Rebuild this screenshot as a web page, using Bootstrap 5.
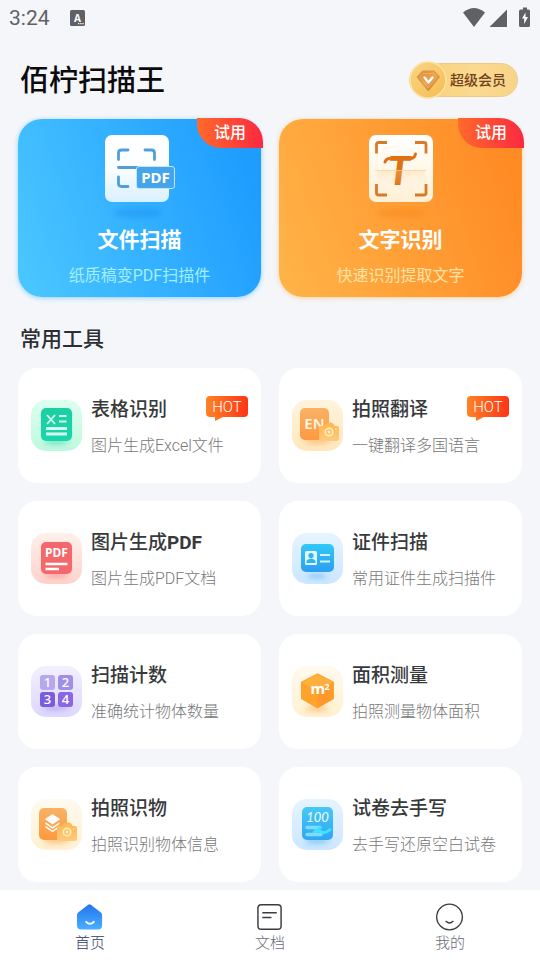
<!DOCTYPE html>
<html lang="zh-CN">
<head>
<meta charset="utf-8">
<meta name="viewport" content="width=device-width, initial-scale=1">
<title>佰柠扫描王</title>
<link href="https://cdn.jsdelivr.net/npm/bootstrap@5.3.0/dist/css/bootstrap.min.css" rel="stylesheet">
<style>
  body { background: #f4f6fa; color: #333; font-family: Roboto, "Noto Sans CJK SC", sans-serif; }
  svg { display: block; flex: none; overflow: visible; }
  .page-pad { padding-left: 18px; padding-right: 18px; }
  .status-bar { height: 36px; padding: 0 10px 0 9px; color: #606164; font-size: 21px; line-height: 36px; gap: 20px; }
  .top-row { margin-top: 25px; margin-bottom: 20px; padding: 0 4px 0 2px; }
  .app-name { padding-top: 2px; font-size: 29px; line-height: 36px; font-weight: 500; color: #0b0b0d; }
  .vip-btn { height: 34px; padding: 0 11px 0 0; border: 1px solid #f0cd82; border-radius: 17px; gap: 2px;
    background: linear-gradient(90deg, #f8cf77, #fbd98e 60%, #f8d48a); color: #70411b; font-size: 14px; line-height: 20px; font-weight: 500; }
  .vip-btn svg { margin: -2px 0; }
  .tile-row { --bs-gutter-x: 18px; --bs-gutter-y: 18px; }
  .hero { padding: 16px 12px 9px; border-radius: 24px; color: #fff; }
  .hero:hover { color: #fff; }
  .hero-scan { background: linear-gradient(70deg, #49c5ff 5%, #1f9dff 90%); box-shadow: 0 1px 5px #8fd0ff; }
  .hero-ocr { background: linear-gradient(70deg, #ffb246 5%, #ff8b25 90%); box-shadow: 0 1px 5px #ffd0a0; }
  .hero-title { margin-top: 5px; font-size: 21px; line-height: 30px; font-weight: 700; }
  .hero-note { margin-top: 9px; font-size: 16px; line-height: 24px; }
  .hero-scan .hero-note { color: #a4efff; }
  .hero-ocr .hero-note { color: #ffe3a6; }
  .trial { top: -1px; right: -2px; width: 66px; height: 30px; border-radius: 0 24px 0 24px;
    background: linear-gradient(90deg, #ff6a2b, #fb2941); font-size: 16px; line-height: 30px; font-weight: 500; }
  .section-title { margin: 27px 2px 14px; font-size: 21px; line-height: 30px; font-weight: 500; color: #2d2e31; }
  .tool { height: 115px; padding: 3px 13px 0; gap: 9px; border-radius: 19px; background: #fff; }
  .tool svg { margin-top: -3px; }
  .tool-title { font-size: 19px; line-height: 28px; font-weight: 500; color: #38393b; }
  .tool-latin { font-weight: 700; }
  .tool-note { margin-top: 10px; font-size: 16px; line-height: 24px; font-weight: 300; color: #77787b; }
  .hot { width: 42px; height: 21px; border-radius: 4px; background: linear-gradient(90deg, #ff8325, #fc3517);
    color: #fff; font-size: 15px; line-height: 22px; font-weight: 300; }
  .hot::after { content: ""; position: absolute; left: 9px; top: 21px; border-style: solid;
    border-width: 4px 8px 0 0; border-color: #fd7622 transparent transparent; }
  .tab-bar { padding: 14px 0 7px; background: #fff; }
  .tab { gap: 1px; font-size: 15px; line-height: 22px; font-weight: 300; color: #686c78; }
  .tab.active { color: #30385f; }
  .tab svg { height: 27px; }
  .ns { font-family: "Noto Sans", sans-serif; }
  .tee { font: italic 900 40px Lato, sans-serif; }
</style>
<script src="https://cdn.jsdelivr.net/npm/bootstrap@5.3.0/dist/js/bootstrap.bundle.min.js"></script>
</head>
<body class="d-flex flex-column min-vh-100">

<svg width="0" height="0" class="position-absolute" aria-hidden="true">
  <defs>
    <linearGradient id="gPaperBlue" x2="0" y2="1"><stop stop-color="#fff"/><stop offset=".5" stop-color="#fafdff"/><stop offset="1" stop-color="#d9f0ff"/></linearGradient>
    <linearGradient id="gPaperOrange" x2="0" y2="1"><stop stop-color="#fff"/><stop offset="1" stop-color="#fff0d6"/></linearGradient>
    <linearGradient id="gBeam" x2="0" y2="1"><stop stop-color="#ffc879" stop-opacity=".65"/><stop offset="1" stop-color="#fff0d6" stop-opacity="0"/></linearGradient>
    <linearGradient id="gGreen" x2="0" y2="1"><stop stop-color="#dcfff0"/><stop offset="1" stop-color="#bff8df"/></linearGradient>
    <linearGradient id="gGreenTile" x2="0" y2="1"><stop stop-color="#1bcfa0"/><stop offset="1" stop-color="#18d7ab"/></linearGradient>
    <linearGradient id="gCream" x2="0" y2="1"><stop stop-color="#fff4dc"/><stop offset="1" stop-color="#ffe7bd"/></linearGradient>
    <linearGradient id="gPale" x2="0" y2="1"><stop stop-color="#fffaf0"/><stop offset="1" stop-color="#fff1d0"/></linearGradient>
    <linearGradient id="gOrangeTile" x2="0" y2="1"><stop stop-color="#f9b265"/><stop offset="1" stop-color="#ff993e"/></linearGradient>
    <linearGradient id="gCam" x2="0" y2="1"><stop stop-color="#ffb64e"/><stop offset="1" stop-color="#ffca7c"/></linearGradient>
    <linearGradient id="gPink" x2="0" y2="1"><stop stop-color="#fff0ea"/><stop offset="1" stop-color="#ffd2cc"/></linearGradient>
    <linearGradient id="gBlue" x2="0" y2="1"><stop stop-color="#e6f4ff"/><stop offset="1" stop-color="#cbe6ff"/></linearGradient>
    <linearGradient id="gBlueTile" x2="0" y2="1"><stop stop-color="#32c9f7"/><stop offset="1" stop-color="#2c9ef2"/></linearGradient>
    <linearGradient id="gExam" x2="0" y2="1"><stop stop-color="#48c8f5"/><stop offset="1" stop-color="#2fa6f4"/></linearGradient>
    <linearGradient id="gViolet" x2="0" y2="1"><stop stop-color="#f2f0ff"/><stop offset="1" stop-color="#ddd7ff"/></linearGradient>
    <linearGradient id="gHome" x2="0" y2="1"><stop stop-color="#2573ed"/><stop offset="1" stop-color="#49b0ff"/></linearGradient>
    <linearGradient id="gMedal" x2="1" y2="1"><stop stop-color="#f9d582"/><stop offset="1" stop-color="#f5bd55"/></linearGradient>
    <linearGradient id="gGem" x2="1" y2="1"><stop stop-color="#d88436"/><stop offset=".5" stop-color="#eaa552"/><stop offset="1" stop-color="#c36c20"/></linearGradient>
    <filter id="soft" x="-50%" y="-100%" width="200%" height="300%"><feGaussianBlur stdDeviation="2.500"/></filter>
    <g id="camera">
      <path d="M2 4h3.500l1-2q1-1.500 3-1.500h2q2 0 3 1.500l1 2H18q2 0 2 2v10.500q0 2.500-2.500 2.500h-15Q0 19 0 16.500V6q0-2 2-2z" fill="url(#gCam)"/>
      <circle cx="10" cy="10" r="3.700" fill="none" stroke="#fff0c4" stroke-width="1.500"/><circle cx="10" cy="10" r="1.400" fill="#fff0c4"/>
      <circle cx="16.800" cy="7" r=".7" fill="#fff0c4"/>
    </g>
  </defs>
</svg>

<header>
  <div class="status-bar d-flex align-items-center">
    <span>3:24</span>
    <svg width="15" height="16" viewBox="0 0 15 16" aria-hidden="true"><rect width="15" height="16" rx="1.500" fill="#606164"/><text class="ns" x="7.500" y="11.500" text-anchor="middle" font-size="10" font-weight="700" fill="#fff">A</text><path d="M8 13.700h1.300M10.200 13.700h1.300M12.400 13.700h1.300" stroke="#fff" stroke-width="1.200"/></svg>
    <svg class="ms-auto" width="67" height="22" viewBox="0 0 67 22" aria-hidden="true" fill="#606164">
      <path d="M0 5.500Q11-3.500 22 5.500L11 20z"/><path d="M44 2.500V20H26.500z"/>
      <path d="M58 2.500h2V.5h4v2h1.500q1.500 0 1.500 1.500v14.500q0 1.500-1.500 1.500h-8q-1.500 0-1.500-1.500V4q0-1.500 2-1.500z"/>
      <path d="M62.500 5.500l-3.500 6h2.200v5.500l3.800-7h-2.500z" fill="#fff"/>
    </svg>
  </div>
  <div class="page-pad">
    <div class="top-row d-flex align-items-center justify-content-between">
      <h1 class="app-name mb-0">佰柠扫描王</h1>
      <button type="button" class="vip-btn d-flex align-items-center">
        <svg width="38" height="38" viewBox="0 0 38 38" aria-hidden="true">
          <circle cx="18" cy="19" r="18" fill="url(#gMedal)" stroke="#fde2a4" stroke-width="1.500"/>
          <path d="M12.500 10h11.500l5.500 6-11.200 14L7 16z" fill="url(#gGem)" stroke="#dd9441" stroke-width="1" stroke-linejoin="round"/>
          <path d="M13 12.500h10.500l3.200 3.700-8.400 10.600L9.800 16.200z" fill="none" stroke="#f0b765" stroke-width=".8"/>
          <path d="M14.500 16.500l4 5 4-5" fill="none" stroke="#fff" stroke-width="2.300" stroke-linecap="round" stroke-linejoin="round"/>
        </svg>
        <span>超级会员</span>
      </button>
    </div>
  </div>
</header>

<main class="page-pad flex-grow-1">
  <div class="row tile-row">
    <div class="col-6">
      <a href="#scan" class="hero hero-scan position-relative d-flex flex-column align-items-center text-decoration-none">
        <span class="trial position-absolute text-center">试用</span>
        <svg width="72" height="85" viewBox="0 0 72 85" aria-hidden="true">
          <ellipse cx="34" cy="78" rx="24" ry="4.500" fill="#1389ee" opacity=".4" filter="url(#soft)"/>
          <rect x="1" width="64" height="67" rx="7" fill="url(#gPaperBlue)"/>
          <g fill="none" stroke="#519fd8" stroke-width="2.800" stroke-linecap="round"><path d="M14.500 24.500V18q0-3 3-3H24M41 15h6.500q3 0 3 3v6.500M14.500 42v6.500q0 3 3 3H24M14.500 32.500h19"/></g>
          <rect x="32.500" y="31.500" width="38" height="22" rx="2.500" fill="#46a5ea" stroke="#bfe6ff"/>
          <text class="ns" x="51.500" y="48" text-anchor="middle" font-size="15" font-weight="700" fill="#fff">PDF</text>
        </svg>
        <span class="hero-title">文件扫描</span>
        <span class="hero-note">纸质稿变PDF扫描件</span>
      </a>
    </div>
    <div class="col-6">
      <a href="#ocr" class="hero hero-ocr position-relative d-flex flex-column align-items-center text-decoration-none">
        <span class="trial position-absolute text-center">试用</span>
        <svg width="72" height="85" viewBox="0 0 72 85" aria-hidden="true">
          <ellipse cx="36" cy="78" rx="24" ry="4.500" fill="#f57d10" opacity=".35" filter="url(#soft)"/>
          <rect x="4" width="64" height="67" rx="7" fill="url(#gPaperOrange)"/>
          <g fill="none" stroke="#d97a26" stroke-width="2.800"><path d="M11.500 18.500V9.500q0-2 2-2H22M50 7.500h9q2 0 2 2v9M11.500 49v9q0 2 2 2H22M50 60h9q2 0 2-2v-9"/></g>
          <text class="tee" x="34" y="50" text-anchor="middle" fill="#df7115">T</text>
          <path d="M44 23.500q5.500.5 6.500-4.500M24 23.500q-3 .5-4 3.500" fill="none" stroke="#df7115" stroke-width="3" stroke-linecap="round"/>
          <rect x="12" y="35" width="48" height="17" fill="url(#gBeam)" opacity=".5"/><path d="M10 35.500h52" stroke="#f3cf9f" stroke-width=".6"/>
        </svg>
        <span class="hero-title">文字识别</span>
        <span class="hero-note">快速识别提取文字</span>
      </a>
    </div>
  </div>

  <h2 class="section-title">常用工具</h2>

  <div class="row tile-row pb-2">
    <div class="col-6">
      <a href="#table" class="tool d-flex align-items-center text-decoration-none">
        <svg width="51" height="51" viewBox="0 0 51 51" aria-hidden="true">
          <rect width="51" height="51" rx="15" fill="url(#gGreen)"/><ellipse cx="25" cy="42" rx="12" ry="2.500" fill="#1bcb9f" opacity=".5" filter="url(#soft)"/>
          <rect x="10" y="8" width="31" height="33" rx="5" fill="url(#gGreenTile)"/>
          <g stroke="#d9fff1" fill="none" stroke-width="2.200"><path d="M16 15l8 9M24 15l-8 9" stroke-width="1.800"/><path d="M28 16h7.500M28 21.500h7.500"/><path d="M15 28.500h21M15 34h21" stroke-width="2.800"/></g>
        </svg>
        <span class="d-flex flex-column flex-grow-1">
          <span class="d-flex justify-content-between"><span class="tool-title">表格识别</span><span class="hot position-relative text-center">HOT</span></span>
          <span class="tool-note">图片生成Excel文件</span>
        </span>
      </a>
    </div>
    <div class="col-6">
      <a href="#translate" class="tool d-flex align-items-center text-decoration-none">
        <svg width="51" height="51" viewBox="0 0 51 51" aria-hidden="true">
          <rect width="51" height="51" rx="15" fill="url(#gCream)"/><ellipse cx="25" cy="41" rx="13" ry="3" fill="#ff9a3c" opacity=".5" filter="url(#soft)"/>
          <rect x="8" y="8" width="29" height="32" rx="5" fill="url(#gOrangeTile)"/>
          <text class="ns" x="22.500" y="28.500" text-anchor="middle" font-size="15" font-weight="600" fill="#fff6e8">EN</text>
          <use href="#camera" x="27" y="22"/>
        </svg>
        <span class="d-flex flex-column flex-grow-1">
          <span class="d-flex justify-content-between"><span class="tool-title">拍照翻译</span><span class="hot position-relative text-center">HOT</span></span>
          <span class="tool-note">一键翻译多国语言</span>
        </span>
      </a>
    </div>
    <div class="col-6">
      <a href="#pdf" class="tool d-flex align-items-center text-decoration-none">
        <svg width="51" height="51" viewBox="0 0 51 51" aria-hidden="true">
          <rect width="51" height="51" rx="15" fill="url(#gPink)"/><ellipse cx="25" cy="42" rx="12" ry="2.500" fill="#f76868" opacity=".5" filter="url(#soft)"/>
          <rect x="10" y="9" width="31" height="32" rx="5" fill="#f4676b"/>
          <text class="ns" x="25.500" y="24" text-anchor="middle" font-size="12" font-weight="700" fill="#fff">PDF</text>
          <path d="M14.500 31h22M14.500 36h13.500" stroke="#fff" stroke-width="2.600"/>
        </svg>
        <span class="d-flex flex-column flex-grow-1">
          <span class="tool-title">图片生成<span class="tool-latin">PDF</span></span>
          <span class="tool-note">图片生成PDF文档</span>
        </span>
      </a>
    </div>
    <div class="col-6">
      <a href="#id" class="tool d-flex align-items-center text-decoration-none">
        <svg width="51" height="51" viewBox="0 0 51 51" aria-hidden="true">
          <rect width="51" height="51" rx="15" fill="url(#gBlue)"/><ellipse cx="25" cy="43" rx="10" ry="2" fill="#2ca5f3" opacity=".5" filter="url(#soft)"/>
          <rect x="9" y="11" width="33" height="28" rx="5" fill="url(#gBlueTile)"/>
          <rect x="13" y="18" width="12" height="14" rx="1.500" fill="#e3f7ff"/><circle cx="19" cy="22.500" r="2.600" fill="#2fb3f4"/><path d="M14.500 30v-1.500q0-2 4.500-3 4.500 1 4.500 3V30z" fill="#2fb3f4"/>
          <path d="M28 22h10M28 28.500h10" stroke="#d4f2ff" stroke-width="2.200"/>
        </svg>
        <span class="d-flex flex-column flex-grow-1">
          <span class="tool-title">证件扫描</span>
          <span class="tool-note">常用证件生成扫描件</span>
        </span>
      </a>
    </div>
    <div class="col-6">
      <a href="#count" class="tool d-flex align-items-center text-decoration-none">
        <svg width="51" height="51" viewBox="0 0 51 51" aria-hidden="true">
          <rect width="51" height="51" rx="15" fill="url(#gViolet)"/><ellipse cx="25" cy="42" rx="13" ry="2.500" fill="#8368e0" opacity=".4" filter="url(#soft)"/>
          <rect x="9" y="9" width="15" height="15" rx="3" fill="#b7a8ee"/><rect x="27" y="9" width="15" height="15" rx="3" fill="#a08fe8"/>
          <rect x="9" y="26" width="15" height="15" rx="3" fill="#7a5cdc"/><rect x="27" y="26" width="15" height="15" rx="3" fill="#8a66e4"/>
          <g class="ns" font-size="13" font-weight="500" fill="#fff" text-anchor="middle"><text x="16.500" y="21">1</text><text x="34.500" y="21">2</text><text x="16.500" y="38">3</text><text x="34.500" y="38">4</text></g>
        </svg>
        <span class="d-flex flex-column flex-grow-1">
          <span class="tool-title">扫描计数</span>
          <span class="tool-note">准确统计物体数量</span>
        </span>
      </a>
    </div>
    <div class="col-6">
      <a href="#area" class="tool d-flex align-items-center text-decoration-none">
        <svg width="51" height="51" viewBox="0 0 51 51" aria-hidden="true">
          <rect width="51" height="51" rx="15" fill="url(#gPale)"/><ellipse cx="25" cy="43" rx="12" ry="2.500" fill="#ff9a2e" opacity=".5" filter="url(#soft)"/>
          <path d="M25.500 8.500L41 16.500v16L25.500 41.500 10 32.500v-16z" fill="#ffa32d" stroke="#ffa32d" stroke-width="2" stroke-linejoin="round"/>
          <path d="M25.500 8.500L41 16.500 25.500 25 10 16.500z" fill="#ffb03c"/><path d="M25.500 25L41 16.500v16L25.500 41.500z" fill="#ff992b"/>
          <g class="ns" font-weight="700" fill="#fff"><text x="18.500" y="27.500" font-size="15">m</text><text x="32.500" y="23.500" font-size="9">2</text></g>
        </svg>
        <span class="d-flex flex-column flex-grow-1">
          <span class="tool-title">面积测量</span>
          <span class="tool-note">拍照测量物体面积</span>
        </span>
      </a>
    </div>
    <div class="col-6">
      <a href="#object" class="tool d-flex align-items-center text-decoration-none">
        <svg width="51" height="51" viewBox="0 0 51 51" aria-hidden="true">
          <rect width="51" height="51" rx="15" fill="url(#gPale)"/><ellipse cx="25" cy="42" rx="13" ry="3" fill="#ff9a3c" opacity=".5" filter="url(#soft)"/>
          <rect x="8" y="9" width="28" height="32" rx="5" fill="url(#gOrangeTile)"/>
          <path d="M21.500 15.500l7 4.700-7 4.700-7-4.700z" fill="#fff" stroke="#fff" stroke-linejoin="round"/><path d="M14.500 24.200l7 4.600 7-4.600M14.500 27.700l7 4.600 7-4.600" fill="none" stroke="#fff" stroke-width="1.500"/>
          <use href="#camera" x="26" y="23"/>
        </svg>
        <span class="d-flex flex-column flex-grow-1">
          <span class="tool-title">拍照识物</span>
          <span class="tool-note">拍照识别物体信息</span>
        </span>
      </a>
    </div>
    <div class="col-6">
      <a href="#exam" class="tool d-flex align-items-center text-decoration-none">
        <svg width="51" height="51" viewBox="0 0 51 51" aria-hidden="true">
          <rect width="51" height="51" rx="15" fill="url(#gBlue)"/><ellipse cx="25" cy="42" rx="12" ry="2.500" fill="#2ca5f3" opacity=".5" filter="url(#soft)"/>
          <rect x="10" y="8" width="31" height="33" rx="5" fill="url(#gExam)"/>
          <text x="25.500" y="23" text-anchor="middle" font-family="Lato, sans-serif" font-size="13" font-style="italic" fill="#f0fdff">100</text>
          <path d="M15 28.500h13M15 35.500h14" stroke="#7fdcfb" stroke-width="3.400" stroke-linecap="round" fill="none"/><path d="M28 28.500l-6 4.500q5-2 8 0t8-2.500" stroke="#3ee4ff" stroke-width="2.800" stroke-linecap="round" stroke-linejoin="round" fill="none"/>
        </svg>
        <span class="d-flex flex-column flex-grow-1">
          <span class="tool-title">试卷去手写</span>
          <span class="tool-note">去手写还原空白试卷</span>
        </span>
      </a>
    </div>
  </div>
</main>

<nav class="tab-bar sticky-bottom" aria-label="主导航">
  <div class="row g-0">
    <a href="#home" class="tab active col d-flex flex-column align-items-center text-decoration-none" aria-current="page">
      <svg width="28" height="28" viewBox="0 0 28 28" aria-hidden="true"><path d="M12.200.8q1.300-1 2.600 0L25 8.500q1.500 1 1.500 3v10.500q0 4.500-4.500 4.500H5Q.5 26.500.5 22V11.500q0-2 1.500-3z" fill="url(#gHome)"/><path d="M10 18.500q4 4 8 0" fill="none" stroke="#fff" stroke-width="2" stroke-linecap="round"/></svg>
      <span>首页</span>
    </a>
    <a href="#docs" class="tab col d-flex flex-column align-items-center text-decoration-none">
      <svg width="28" height="28" viewBox="0 0 28 28" aria-hidden="true" fill="none" stroke="#3b3c40" stroke-width="1.500"><rect x="1.500" y=".7" width="24" height="25.500" rx="3.500"/><path d="M6 9h15M6 14h9.500"/></svg>
      <span>文档</span>
    </a>
    <a href="#me" class="tab col d-flex flex-column align-items-center text-decoration-none">
      <svg width="28" height="28" viewBox="0 0 28 28" aria-hidden="true" fill="none" stroke="#3b3c40" stroke-width="1.400" stroke-linecap="round"><circle cx="13.500" cy="13.500" r="13.300"/><path d="M9.800 18q3.700 3.500 7.400 0"/></svg>
      <span>我的</span>
    </a>
  </div>
</nav>
</body>
</html>
